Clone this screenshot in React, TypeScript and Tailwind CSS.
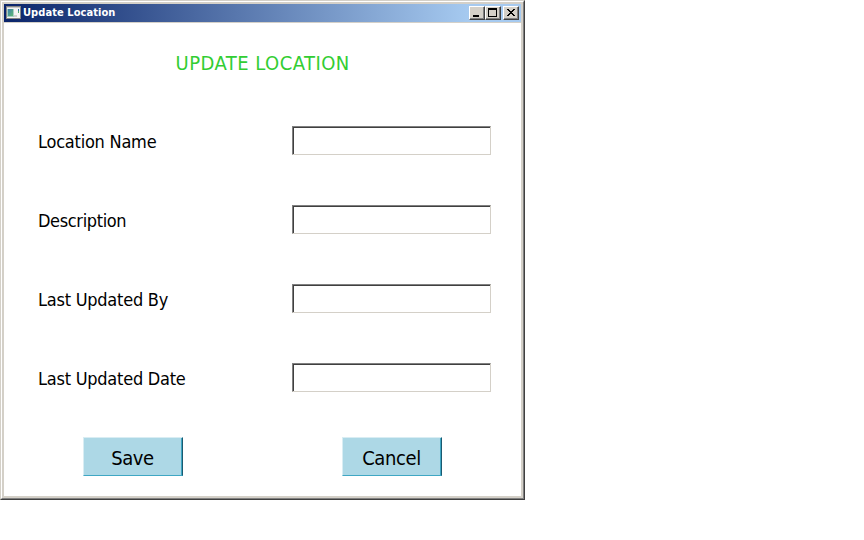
import React from "react";

const rows = [
  { label: "Location Name", track: "tracking-[-0.23px]" },
  { label: "Description", track: "tracking-[-0.36px]" },
  { label: "Last Updated By", track: "tracking-[-0.24px]" },
  { label: "Last Updated Date", track: "tracking-[-0.24px]" },
];

function WindowIcon() {
  return (
    <svg width="15" height="13" viewBox="0 0 15 13" shapeRendering="crispEdges" className="mt-0.5 shrink-0 self-start">
      <defs>
        <linearGradient id="pane" x1="0" y1="0" x2="1" y2="1">
          <stop offset="0" stopColor="#3f7fae" />
          <stop offset="1" stopColor="#5cb974" />
        </linearGradient>
      </defs>
      <rect width="15" height="13" fill="#858585" />
      <rect x="1" y="1" width="13" height="11" fill="#f4f4f4" />
      <rect x="1" y="1" width="13" height="1" fill="#c8c8c8" />
      <rect x="1" y="3" width="7" height="8" fill="#a9cfc4" />
      <rect x="2" y="3" width="5" height="7" fill="url(#pane)" />
      <rect x="8" y="9" width="3" height="2" fill="#cfcfcf" />
      <rect x="12" y="3" width="1" height="2" fill="#2f6fa5" />
      <rect x="12" y="5" width="1" height="2" fill="#4fb06a" />
    </svg>
  );
}

function CaptionButton({ label, children }: { label: string; children: React.ReactNode }) {
  return (
    <button
      aria-label={label}
      className="h-[14px] w-4 border border-t-white border-l-white border-r-[#404040] border-b-[#404040] bg-[#d4d0c8]"
    >
      <span className="block h-3 w-[14px] border-r border-b border-[#808080]">
        <svg width="13" height="11" viewBox="0 0 13 11" shapeRendering="crispEdges" className="block">
          {children}
        </svg>
      </span>
    </button>
  );
}

function ActionButton({ children }: { children: React.ReactNode }) {
  return (
    <button className="h-[39px] w-[100px] border border-t-[#d9edf3] border-l-[#d9edf3] border-r-[#1b5a70] border-b-[#3fa7c4] bg-[#add8e6] text-[20px] tracking-[-0.4px] text-black">
      <span className="flex h-full w-full items-center justify-center border-r border-[#3fa7c4] pt-[2px]">
        {children}
      </span>
    </button>
  );
}

export default function App() {
  return (
    <div className="h-[540px] w-[864px] overflow-hidden bg-white font-['DejaVu_Sans_Condensed','DejaVu_Sans',sans-serif] [font-stretch:condensed]">
      <div className="h-[500px] w-[525px] border border-t-[#d4d0c8] border-l-[#d4d0c8] border-r-[#404040] border-b-[#404040]">
        <div className="h-full border border-t-white border-l-white border-r-[#808080] border-b-[#808080]">
          <div className="flex h-full flex-col border-2 border-[#d4d0c8] bg-white">
            <header className="flex h-[19px] shrink-0 items-center border-b border-[#d4d0c8] bg-linear-to-r/srgb from-[#0a246a] to-[#a6caf0] to-90% pr-0.5 pl-0.5">
              <WindowIcon />
              <span className="ml-0.5 flex-1 text-[11px] leading-[18px] font-bold tracking-[0.07px] whitespace-nowrap text-white">
                Update Location
              </span>
              <CaptionButton label="Minimize">
                <rect x="3" y="8" width="6" height="2" />
              </CaptionButton>
              <CaptionButton label="Maximize">
                <path d="M2 1h9v9h-9zM3 3v6h7v-6z" fillRule="evenodd" />
              </CaptionButton>
              <span className="w-0.5" />
              <CaptionButton label="Close">
                <path d="M3 2h2v1h1v1h2v-1h1v-1h2v1h-1v1h-1v1h-1v1h1v1h1v1h1v1h-2v-1h-1v-1h-2v1h-1v1h-2v-1h1v-1h1v-1h1v-1h-1v-1h-1v-1h-1z" />
              </CaptionButton>
            </header>
            <h1 className="mt-[26px] ml-[171.5px] h-7 text-[20px] leading-7 tracking-[0.48px] whitespace-nowrap text-[#32cd32]">
              UPDATE LOCATION
            </h1>
            <div className="mt-[49px] flex flex-col gap-[50px] pl-[34px]">
              {rows.map((r) => (
                <label key={r.label} className="flex h-[29px] items-center">
                  <span className={`w-[254px] pt-[2px] text-[18px] leading-[27px] whitespace-nowrap text-black ${r.track}`}>
                    {r.label}
                  </span>
                  <span className="h-[29px] w-[199px] border border-t-[#808080] border-l-[#808080] border-r-[#d4d0c8] border-b-[#d4d0c8]">
                    <input className="block h-full w-full border-t border-l border-[#404040] bg-white outline-none" />
                  </span>
                </label>
              ))}
            </div>
            <div className="mt-[45px] flex gap-[159px] pl-[79px]">
              <ActionButton>Save</ActionButton>
              <ActionButton>Cancel</ActionButton>
            </div>
          </div>
        </div>
      </div>
    </div>
  );
}
